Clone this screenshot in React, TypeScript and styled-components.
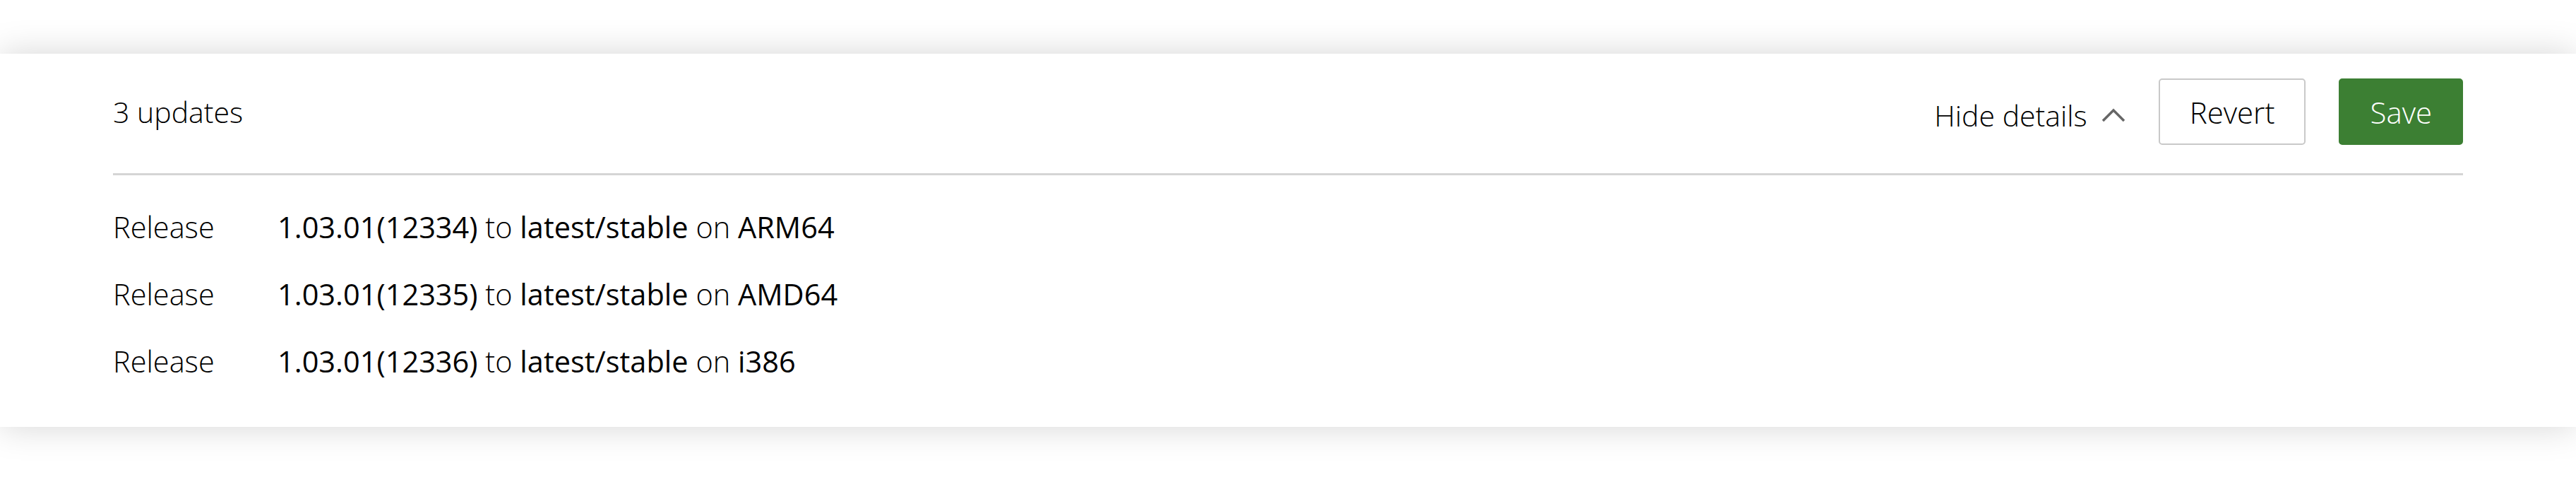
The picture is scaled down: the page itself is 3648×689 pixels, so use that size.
import React from "react";
import styled, { createGlobalStyle } from "styled-components";

const GlobalStyle = createGlobalStyle`
  html, body {
    margin: 0;
    padding: 0;
    background: #ffffff;
  }
  body {
    font-family: "Open Sans", "Noto Sans", Arial, sans-serif;
    color: #000000;
  }
`;

const Page = styled.div`
  padding-top: 76px;
  min-height: 689px;
  box-sizing: border-box;
  overflow: hidden;
`;

const Panel = styled.section`
  background: #ffffff;
  box-shadow: 0 0 46px 0 rgba(0, 0, 0, 0.17);
  padding: 35px 160px 45px;
  display: flex;
  flex-direction: column;
`;

const Header = styled.header`
  display: flex;
  align-items: center;
  justify-content: space-between;
  height: 94px;
`;

const Title = styled.h2`
  margin: 0;
  font-size: 41px;
  font-weight: 300;
  color: #000000;
`;

const Actions = styled.div`
  display: flex;
  align-items: center;
  gap: 47px;
`;

const DetailsToggle = styled.button`
  display: flex;
  align-items: center;
  gap: 20px;
  background: none;
  border: none;
  padding: 10px 0 0;
  font-family: inherit;
  font-size: 41px;
  font-weight: 300;
  color: #000000;
  cursor: pointer;
`;

const Button = styled.button<{ $primary?: boolean }>`
  height: 94px;
  box-sizing: border-box;
  padding: 0 42px;
  border-radius: 5px;
  font-family: inherit;
  font-size: 42px;
  font-weight: 300;
  cursor: pointer;
  border: 2px solid ${(p) => (p.$primary ? "#3c7f33" : "#c9c9c9")};
  background: ${(p) => (p.$primary ? "#3c7f33" : "#ffffff")};
  color: ${(p) => (p.$primary ? "#ffffff" : "#000000")};
`;

const Divider = styled.hr`
  margin: 40px 0 0;
  border: none;
  height: 3px;
  background: #d5d5d5;
`;

const List = styled.ul`
  list-style: none;
  margin: 26px 0 0;
  padding: 0;
`;

const Row = styled.li`
  display: grid;
  grid-template-columns: 233px 1fr;
  line-height: 95px;
  font-size: 41.5px;
`;

const Label = styled.span`
  font-weight: 300;
  color: #000000;
`;

const Value = styled.span`
  color: #000000;
`;

const Strong = styled.span`
  font-weight: 400;
`;

const Light = styled.span`
  font-weight: 300;
`;

const Chevron = () => (
  <svg width="34" height="20" viewBox="0 0 34 20" fill="none">
    <polyline
      points="2,18 17,3 32,18"
      stroke="#666666"
      strokeWidth="3.5"
      strokeLinecap="butt"
      strokeLinejoin="miter"
    />
  </svg>
);

const updates = [
  { rev: "1.03.01(12334)", channel: "latest/stable", arch: "ARM64" },
  { rev: "1.03.01(12335)", channel: "latest/stable", arch: "AMD64" },
  { rev: "1.03.01(12336)", channel: "latest/stable", arch: "i386" },
];

export default function App() {
  return (
    <>
      <GlobalStyle />
      <Page>
        <Panel>
          <Header>
            <Title>3 updates</Title>
            <Actions>
              <DetailsToggle>
                Hide details
                <Chevron />
              </DetailsToggle>
              <Button>Revert</Button>
              <Button $primary>Save</Button>
            </Actions>
          </Header>
          <Divider />
          <List>
            {updates.map((u) => (
              <Row key={u.rev}>
                <Label>Release</Label>
                <Value>
                  <Strong>{u.rev}</Strong> <Light>to</Light>{" "}
                  <Strong>{u.channel}</Strong> <Light>on</Light>{" "}
                  <Strong>{u.arch}</Strong>
                </Value>
              </Row>
            ))}
          </List>
        </Panel>
      </Page>
    </>
  );
}
